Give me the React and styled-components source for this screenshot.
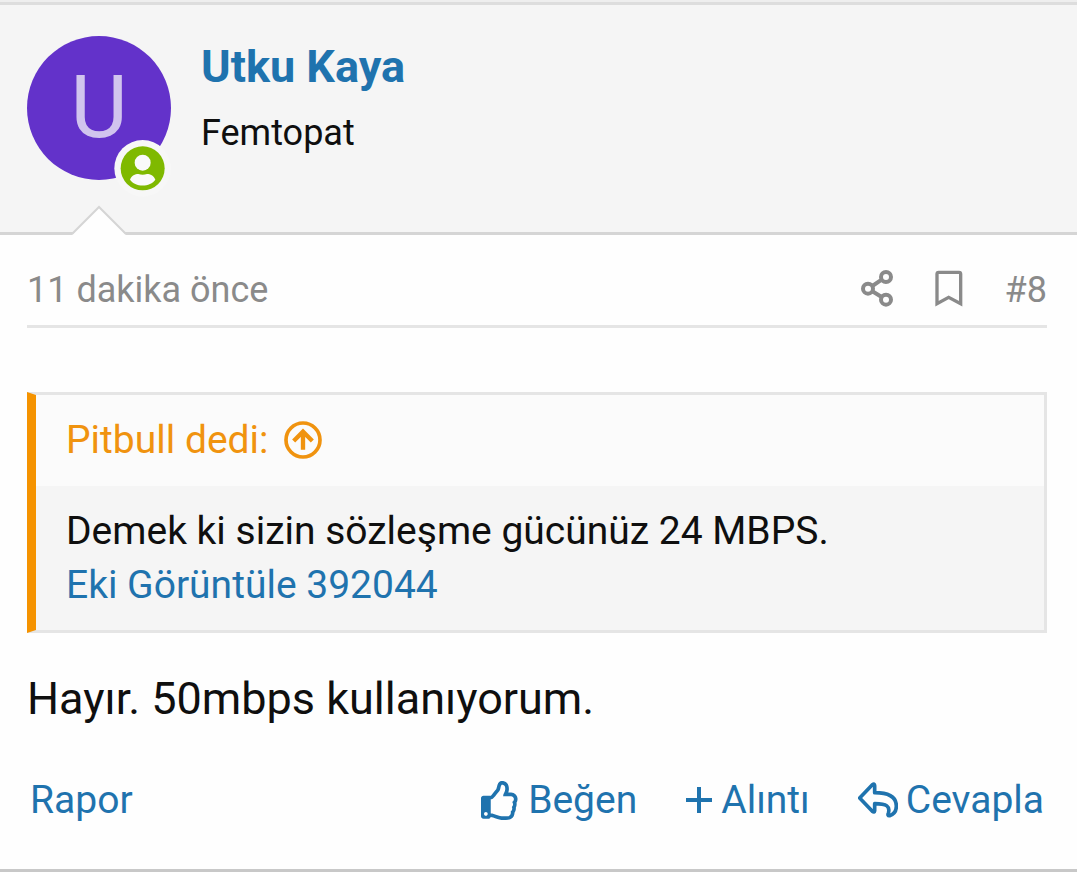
import React from 'react';
import styled, { createGlobalStyle } from 'styled-components';
import { FaRegThumbsUp } from 'react-icons/fa';

export default function App() {
  return (
    <>
      <GlobalStyle />
      <Post>
        <UserHeader>
          <AvatarLink href="#utku-kaya" aria-label="Utku Kaya">
            U
            <OnlineBadge />
          </AvatarLink>
          <UserInfo>
            <UserName href="#utku-kaya">Utku Kaya</UserName>
            <UserTitle>Femtopat</UserTitle>
          </UserInfo>
          <HeaderArrow />
        </UserHeader>

        <PostBody>
          <MetaRow>
            <MetaLink href="#post-8">
              <time>11 dakika önce</time>
            </MetaLink>
            <MetaActions>
              <IconButton type="button" aria-label="Paylaş">
                <ShareIcon />
              </IconButton>
              <IconButton type="button" aria-label="Yer imi">
                <BookmarkIcon />
              </IconButton>
              <MetaLink href="#post-8">#8</MetaLink>
            </MetaActions>
          </MetaRow>

          <Quote>
            <QuoteTitle href="#pitbull">
              Pitbull dedi:
              <JumpIcon />
            </QuoteTitle>
            <QuoteContent>
              <p>Demek ki sizin sözleşme gücünüz 24 MBPS.</p>
              <QuoteLink href="#ek-392044">Eki Görüntüle 392044</QuoteLink>
            </QuoteContent>
          </Quote>

          <Message>Hayır. 50mbps kullanıyorum.</Message>

          <Footer>
            <Action type="button">Rapor</Action>
            <ActionGroup>
              <Action type="button">
                <ThumbIcon viewBox="0 0 512 512" />
                Beğen
              </Action>
              <Action type="button">
                <PlusIcon />
                Alıntı
              </Action>
              <Action type="button">
                <ReplyIcon />
                Cevapla
              </Action>
            </ActionGroup>
          </Footer>
        </PostBody>
      </Post>
    </>
  );
}

function OnlineBadge() {
  return (
    <Badge viewBox="344 422 171 171" aria-hidden="true">
      <circle cx="430" cy="507" r="85" fill="#f7f7f7" />
      <circle cx="430" cy="507" r="66" fill="#7fb900" />
      <circle cx="430" cy="490" r="24" fill="#fafafa" />
      <path
        d="M392 541C397 529 407 524 417 524Q430 528 443 524C453 524 463 529 468 541C453 564 407 564 392 541Z"
        fill="#fafafa"
      />
    </Badge>
  );
}

function HeaderArrow() {
  return (
    <Arrow viewBox="0 0 56 30" aria-hidden="true">
      <path d="M1 30L28 2L55 30Z" fill="#fefefe" />
      <path d="M1 29L28 2L55 29" fill="none" stroke="#d5d5d5" strokeWidth="2" />
    </Arrow>
  );
}

function ShareIcon() {
  return (
    <svg width="32" height="37" viewBox="65 60 96 111" fill="none" stroke="currentColor" strokeWidth="12">
      <circle cx="86" cy="116" r="15" />
      <circle cx="140" cy="81" r="15" />
      <circle cx="140" cy="149" r="15" />
      <path d="M99 108L127 89M99 124L127 141" />
    </svg>
  );
}

function BookmarkIcon() {
  return (
    <svg width="28" height="37" viewBox="286 62 84 111" fill="none" stroke="currentColor" strokeWidth="10">
      <path d="M292 163V74Q292 69 297 69H358Q363 69 363 74V163L327 144Z" />
    </svg>
  );
}

function JumpIcon() {
  return (
    <svg width="38" height="38" viewBox="851 121 114 114" fill="none" stroke="currentColor" strokeWidth="11">
      <circle cx="908" cy="178" r="51" />
      <path d="M880 181L908 153L936 181M908 155V207" strokeWidth="13" />
    </svg>
  );
}

function PlusIcon() {
  return (
    <svg width="28" height="28" viewBox="0 0 28 28" fill="none" stroke="currentColor" strokeWidth="4">
      <path d="M1 14H27M14 1V27" />
    </svg>
  );
}

function ReplyIcon() {
  return (
    <svg width="40" height="36" viewBox="563 65 120 108" fill="none" stroke="currentColor" strokeWidth="11">
      <path
        d="M568 113L606 73Q613 68 613 76V97C652 97 678 107 678 137C678 151 670 162 658 166C653 167 652 163 654 159C660 138 650 130 613 130V151Q612 158 606 153Z"
        strokeLinejoin="round"
      />
    </svg>
  );
}

const GlobalStyle = createGlobalStyle`
  * {
    box-sizing: border-box;
  }

  body {
    margin: 0;
    background: #fefefe;
    color: #0f0f0f;
    font-family: Roboto, "Liberation Sans", sans-serif;
  }

  a {
    color: inherit;
    text-decoration: none;
  }

  p {
    margin: 0;
  }

  button {
    padding: 0;
    border: 0;
    background: none;
    color: inherit;
    font: inherit;
    cursor: pointer;
  }

  svg {
    flex-shrink: 0;
  }
`;

const Post = styled.article`
  border-top: 2px solid #eeeeee;
  border-bottom: 3px solid #c8c8c8;
`;

const UserHeader = styled.header`
  position: relative;
  display: flex;
  gap: 30px;
  padding: 31px 27px 52px;
  border-top: 3px solid #dddddd;
  border-bottom: 3px solid #d5d5d5;
  background: #f5f5f5;
`;

const AvatarLink = styled.a`
  position: relative;
  display: flex;
  align-items: center;
  justify-content: center;
  width: 144px;
  height: 144px;
  padding-bottom: 4px;
  border-radius: 50%;
  background: #6332ca;
  && {
    color: #d1c4ee;
  }
  font-size: 88px;
`;

const Badge = styled.svg`
  position: absolute;
  right: 0;
  bottom: -17px;
  width: 57px;
  height: 57px;
`;

const UserInfo = styled.div`
  display: flex;
  flex-direction: column;
  gap: 11px;
`;

const UserName = styled.a`
  && {
    color: #1f73ae;
  }
  font-size: 45px;
  font-weight: 700;
  line-height: 61px;
`;

const UserTitle = styled.span`
  font-size: 36px;
  line-height: 50px;
`;

const Arrow = styled.svg`
  position: absolute;
  left: 71px;
  bottom: -3px;
  width: 56px;
  height: 30px;
`;

const PostBody = styled.div`
  padding: 30px 30px 42px 27px;
`;

const MetaRow = styled.div`
  display: flex;
  align-items: center;
  justify-content: space-between;
  padding-bottom: 10px;
  border-bottom: 3px solid #e5e5e5;
  color: #8a8a8a;
  font-size: 36px;
  line-height: 50px;
`;

const MetaLink = styled.a`
  color: inherit;
`;

const MetaActions = styled.div`
  display: flex;
  align-items: center;
  gap: 42px;
`;

const IconButton = styled.button`
  display: flex;
  padding-bottom: 4px;
`;

const Quote = styled.blockquote`
  margin: 64px 0 34px;
  border: 3px solid #e5e5e5;
  border-left: 9px solid #f59300;
  background: #f5f5f5;
  font-size: 39px;
  line-height: 54px;
`;

const QuoteTitle = styled.a`
  display: flex;
  align-items: center;
  gap: 16px;
  padding: 18px 30px 19px;
  background: #fbfbfb;
  && {
    color: #f0930f;
  }
`;

const QuoteContent = styled.div`
  padding: 18px 30px;
`;

const QuoteLink = styled.a`
  && {
    color: #1f73ae;
  }
`;

const Message = styled.p`
  font-size: 45px;
  line-height: 63px;
`;

const Footer = styled.footer`
  display: flex;
  justify-content: space-between;
  margin-top: 43px;
  padding: 0 3px;
  color: #1f73ae;
  font-size: 39px;
  line-height: 54px;
`;

const ActionGroup = styled.div`
  display: flex;
  gap: 48px;
`;

const Action = styled.button`
  display: flex;
  align-items: center;
  gap: 8px;
`;

const ThumbIcon = styled(FaRegThumbsUp)`
  width: 39px;
  height: 39px;
`;
